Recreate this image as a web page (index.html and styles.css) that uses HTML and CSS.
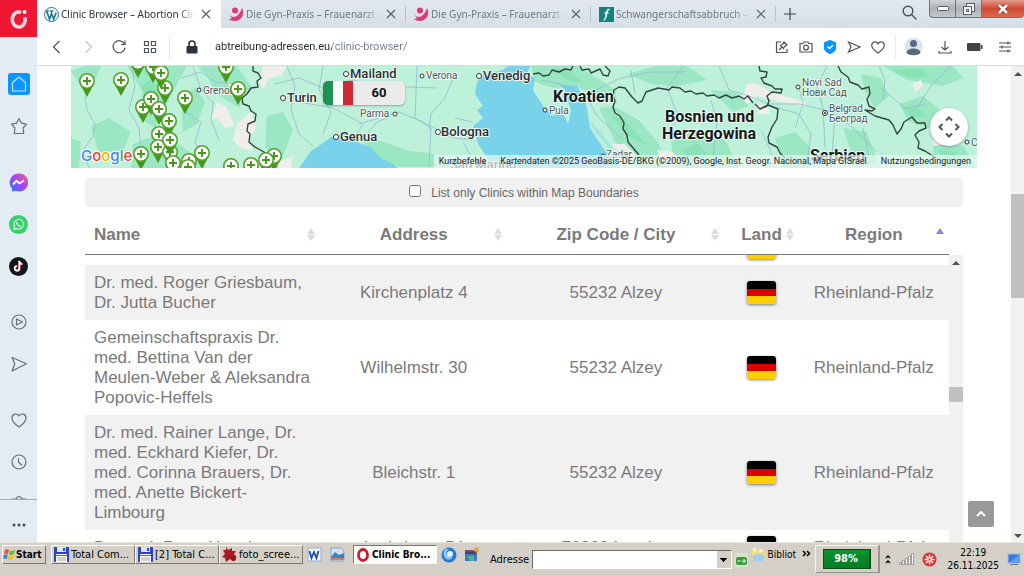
FILE: index.html
```html
<!DOCTYPE html>
<html lang="de">
<head>
    <meta charset="UTF-8">
    <meta name="viewport" content="width=device-width, initial-scale=1.0">
    <title>Clinic Browser – Abortion Clinics</title>
    <link rel="stylesheet" href="styles.css">
</head>
<body>
    <div class="window">
        <!-- left rail -->
        <nav class="rail">
            <button class="rail-logo" aria-label="Menu">
                <svg width="20" height="22" viewBox="0 0 20 22"><path d="M12 4.500A6.500 7.500 0 1 0 16 9.500v2" fill="none" stroke="#fbdadd" stroke-width="3.600"/><circle cx="15.500" cy="4" r="2" fill="#fff"/></svg>
            </button>
            <div class="rail-items">
                <button class="rail-button" aria-label="Home"><svg width="22" height="22" viewBox="0 0 22 22"><rect width="22" height="22" rx="3" fill="#0a95ff"/><path d="M4.500 9.500 11 4l6.500 5.500V18h-13z" fill="none" stroke="#bfe3ff" stroke-width="1.200" stroke-linejoin="round"/></svg></button>
                <button class="rail-button" aria-label="Bookmarks"><svg class="line" width="18" height="18" viewBox="0 0 18 18"><path d="m9 1.500 2.500 4.700 5 .9-3.400 3.900.6 5.500H4.300l.6-5.500L1.500 7.100l5-.9z"/></svg></button>
                <button class="rail-button group" aria-label="Messenger"><svg width="19" height="19" viewBox="0 0 19 19"><defs><linearGradient id="msg" x1="0" y1="1" x2="1" y2="0"><stop offset="0" stop-color="#2a7bff"/><stop offset=".5" stop-color="#a142f5"/><stop offset="1" stop-color="#ff6670"/></linearGradient></defs><path d="M9.500.5a9 9 0 1 1-3 17.200L3 18.500v-3A9 9 0 0 1 9.500.5z" fill="url(#msg)"/><path d="m4 11.500 3.500-3.700 3 2.500L15 7.500" fill="none" stroke="#fff" stroke-width="2"/></svg></button>
                <button class="rail-button" aria-label="WhatsApp"><svg width="19" height="19" viewBox="0 0 19 19"><circle cx="9.500" cy="9.500" r="9.500" fill="#35d06c"/><path d="m4.800 14.300.8-2.800a4.800 4.800 0 1 1 1.900 1.900z" fill="none" stroke="#e8fff0" stroke-width="1.100"/><path d="M7.800 7.300c0 2.200 1.700 3.900 3.900 3.900" fill="none" stroke="#fff" stroke-width="1.500"/></svg></button>
                <button class="rail-button" aria-label="TikTok"><svg width="19" height="19" viewBox="0 0 19 19"><circle cx="9.500" cy="9.500" r="9.500" fill="#14151b"/><path d="M10.700 4v7.500a2.300 2.300 0 1 1-2.300-2.300M10.700 4.300c.2 1.800 1.300 2.800 3 2.900" fill="none" stroke="#f2476a" stroke-width="1.900"/><path d="M10.200 3.800v7.500A2.300 2.300 0 1 1 7.900 9M10.200 4.100c.2 1.800 1.300 2.800 3 2.900" fill="none" stroke="#fff" stroke-width="1.700"/></svg></button>
                <button class="rail-button group" aria-label="Player"><svg class="line" width="18" height="18" viewBox="0 0 18 18"><circle cx="9" cy="9" r="7"/><path d="M6.500 6v6l6-3z"/></svg></button>
                <button class="rail-button" aria-label="Flow"><svg class="line" width="18" height="18" viewBox="0 0 18 18"><path d="m2 2.500 14.500 6.200L2 16l2.800-7.300z"/></svg></button>
                <button class="rail-button group" aria-label="Pinboards"><svg class="line" width="18" height="18" viewBox="0 0 18 18"><path d="M9 16C6 14 2 11 2 7c0-4 5-5.500 7-2 2-3.500 7-2 7 2 0 4-4 7-7 9z"/></svg></button>
                <button class="rail-button" aria-label="History"><svg class="line" width="18" height="18" viewBox="0 0 18 18"><circle cx="9" cy="9" r="7"/><path d="M8.500 5v4l3.500 3.500"/></svg></button>
                <button class="rail-button" aria-label="Settings"><svg class="line" width="18" height="18" viewBox="0 0 18 18"><path d="M2 4h4l1-1c0-2 4-2 4 0l1 1h4v9l-7 3-7-3z"/></svg></button>
            </div>
            <button class="rail-more" aria-label="More"><svg width="14" height="4" viewBox="0 0 14 4" fill="#444b55"><circle cx="2" cy="2" r="1.500"/><circle cx="7" cy="2" r="1.500"/><circle cx="12" cy="2" r="1.500"/></svg></button>
        </nav>

        <div class="browser">
            <!-- tabs -->
            <div class="tabs">
                <div class="tab active">
                    <svg width="15" height="15" viewBox="0 0 15 15"><circle cx="7.500" cy="7.500" r="7" fill="#fff" stroke="#21759b"/><path d="M2.500 4 5.500 12 7.500 6.500 9.700 12l2.500-6.500M1.800 4h3M6 4h3.500" fill="none" stroke="#21759b" stroke-width="1.700"/></svg>
                    <button class="tab-title">Clinic Browser – Abortion Clinics</button>
                    <button class="close" aria-label="Close tab"><svg width="10" height="10" viewBox="0 0 10 10"><path d="m1 1 8 8M9 1 1 9"/></svg></button>
                </div>
                <div class="tab">
                    <svg width="15" height="15" viewBox="0 0 15 15" fill="#dc3a77"><circle cx="6" cy="3.500" r="3"/><path d="M1 8c3 4 9 2 12-7 3 5 0 13-7 13-3 0-5-1-6-2 2 0 3-1 3-1-1-1-2-2-2-3z"/></svg>
                    <button class="tab-title">Die Gyn-Praxis – Frauenarzt Alzey</button>
                    <button class="close" aria-label="Close tab"><svg width="10" height="10" viewBox="0 0 10 10"><path d="m1 1 8 8M9 1 1 9"/></svg></button>
                </div>
                <div class="tab">
                    <svg width="15" height="15" viewBox="0 0 15 15" fill="#dc3a77"><circle cx="6" cy="3.500" r="3"/><path d="M1 8c3 4 9 2 12-7 3 5 0 13-7 13-3 0-5-1-6-2 2 0 3-1 3-1-1-1-2-2-2-3z"/></svg>
                    <button class="tab-title">Die Gyn-Praxis – Frauenarzt Alzey</button>
                    <button class="close" aria-label="Close tab"><svg width="10" height="10" viewBox="0 0 10 10"><path d="m1 1 8 8M9 1 1 9"/></svg></button>
                </div>
                <div class="tab">
                    <svg width="15" height="15" viewBox="0 0 15 15"><rect width="15" height="15" fill="#14837b"/><path d="M10.500 2.500C7.500 2 8 5 7 9c-.5 3-1 4-2.500 4M5.500 6h4" fill="none" stroke="#fff" stroke-width="1.500"/></svg>
                    <button class="tab-title">Schwangerschaftsabbruch – Familienplanung</button>
                    <button class="close" aria-label="Close tab"><svg width="10" height="10" viewBox="0 0 10 10"><path d="m1 1 8 8M9 1 1 9"/></svg></button>
                </div>
                <button class="new-tab" aria-label="New tab"><svg width="12" height="12" viewBox="0 0 12 12"><path d="M6 0v12M0 6h12" stroke="#3d4650" stroke-width="1.200"/></svg></button>
                <div class="window-tools">
                    <button class="tab-search" aria-label="Search tabs"><svg width="15" height="15" viewBox="0 0 15 15" fill="none" stroke="#4b535c" stroke-width="1.400"><circle cx="6" cy="6" r="4.800"/><path d="m9.500 9.500 5 5"/></svg></button>
                    <button class="win-button" aria-label="Minimize"><svg width="12" height="5" viewBox="0 0 12 5"><rect x=".5" y=".5" width="11" height="4" rx="1" fill="#fff" stroke="#5b5f66"/></svg></button>
                    <button class="win-button" aria-label="Restore"><svg width="12" height="12" viewBox="0 0 12 12" fill="#f6f6f6" stroke="#5b5f66"><rect x="3.500" y=".5" width="8" height="8"/><rect x=".5" y="3.500" width="8" height="8"/><rect x="3.500" y="6.500" width="2" height="2"/></svg></button>
                    <button class="win-button win-close" aria-label="Close"><svg width="12" height="10" viewBox="0 0 12 10"><path d="m2 1 8 8M10 1 2 9" stroke="#6b2a22" stroke-width="4"/><path d="m2 1 8 8M10 1 2 9" stroke="#fff" stroke-width="2.600"/></svg></button>
                </div>
            </div>

            <!-- address bar -->
            <div class="toolbar">
                <button class="tool" aria-label="Back"><svg width="16" height="16" viewBox="0 0 16 16"><path d="M10.500 2 4.500 8l6 6"/></svg></button>
                <button class="tool disabled" aria-label="Forward"><svg width="16" height="16" viewBox="0 0 16 16"><path d="m5.500 2 6 6-6 6"/></svg></button>
                <button class="tool" aria-label="Reload"><svg width="16" height="16" viewBox="0 0 16 16"><path d="M13.500 5A6 6 0 1 0 14 9M14 1.500V5.500H10"/></svg></button>
                <button class="tool" aria-label="Speed Dial"><svg width="16" height="16" viewBox="0 0 16 16"><path d="M2.500 2.500h4v4h-4zM9.500 2.500h4v4h-4zM2.500 9.500h4v4h-4zM9.500 9.500h4v4h-4z"/></svg></button>
                <span class="divider"></span>
                <svg class="lock" width="12" height="14" viewBox="0 0 12 14"><rect x=".5" y="6" width="11" height="7.500" rx="1" fill="#2b333d"/><path d="M3 6V4a3 3 0 0 1 6 0v2" fill="none" stroke="#2b333d" stroke-width="1.600"/></svg>
                <input class="url" type="text" aria-label="Address" value="abtreibung-adressen.eu/clinic-browser/">
                <div class="tool-group">
                    <button class="tool" aria-label="Pin"><svg width="14" height="14" viewBox="0 0 14 14"><path d="M6 2H1.500v10.500h10.500V9M4 10l3-3M5.500 5.500l3 3 1-2L12 5 9 2 7.500 4.500z"/></svg></button>
                    <button class="tool" aria-label="Snapshot"><svg width="14" height="14" viewBox="0 0 14 14"><path d="M1 3.500h3l1-1.500h4l1 1.500h3V12H1z"/><circle cx="7" cy="7.500" r="2.400"/></svg></button>
                    <button class="tool" aria-label="Shield"><svg width="14" height="14" viewBox="0 0 14 14"><path d="M7 .5 12.500 3v5c0 3-3 4.500-5.500 5.500C4.500 12.500 1.500 11 1.500 8V3z" fill="#0a95ff" stroke="#0a95ff"/><path d="m4.500 6.500 2 2 3.500-3.500" stroke="#fff" stroke-width="1.500"/></svg></button>
                    <button class="tool" aria-label="Send"><svg width="14" height="14" viewBox="0 0 14 14"><path d="m1.500 2 11.500 5-11.500 5 2.500-5z"/></svg></button>
                    <button class="tool" aria-label="Favourite"><svg width="14" height="14" viewBox="0 0 14 14"><path d="M7 13C4 11 .7 8.500.7 5.300.7 1.500 5.500.8 7 3.800c1.500-3 6.300-2.300 6.300 1.500C13.300 8.500 10 11 7 13z"/></svg></button>
                </div>
                <span class="divider"></span>
                <div class="tool-group wide">
                    <button class="tool" aria-label="Profile"><svg width="19" height="19" viewBox="0 0 19 19"><circle cx="9.500" cy="9.500" r="9" fill="#d8e4ef" stroke="none"/><circle cx="9.500" cy="6.500" r="3.500" fill="#56687d" stroke="none"/><path d="M2.500 16c0-6 14-6 14 0-3 3-11 3-14 0z" fill="#56687d" stroke="none"/></svg></button>
                    <button class="tool" aria-label="Downloads"><svg width="14" height="14" viewBox="0 0 14 14"><path d="M7 1v9M3.500 7 7 10l3.500-3M1 11v2h12v-2"/></svg></button>
                    <button class="tool" aria-label="Battery saver"><svg width="16" height="8" viewBox="0 0 16 8"><rect width="13.500" height="8" rx="1" fill="#444" stroke="none"/><rect x="14" y="2" width="1.500" height="4" fill="#444" stroke="none"/></svg></button>
                    <button class="tool" aria-label="Easy setup"><svg width="14" height="12" viewBox="0 0 14 12"><path d="M1 2h12M1 6h12M1 10h12M10 .5v3M4 4.500v3M10 8.500v3"/></svg></button>
                </div>
            </div>

            <div class="viewport">
                <main class="page">
                    <div class="map">
                        <svg class="map-canvas" viewBox="0 0 906 102" preserveAspectRatio="xMidYMid slice">
                            <defs>
                                <g id="pin">
                                    <path d="M-7.500 2 0 16 7.500 2z" fill="#46971b"/>
                                    <circle r="7.200" fill="#fff" stroke="#55a228" stroke-width="1.600"/>
                                    <path d="M-4 0h8M0-4v8" stroke="#46971b" stroke-width="1.900"/>
                                </g>
                            </defs>
                            <rect width="906" height="102" fill="#bdf1da"/>
                            <!-- forests -->
                            <g fill="#9be7c3">
                                <path d="M0 5l14-5h16l-5 12-15 8zM56 0h60l-10 18-12 24-10 20-18-12 6-24zM110 30l14-8 10 14-8 22-14 8zM20 60l18-8 22 14-8 18-24 4zM126 0h40l14 20-12 22-22-14-10-18zM196 50l16-4 10 18-10 26-18-8zM62 78l30-12 24 18 20 18H60zM0 72l10 4-2 26H0z"/>
                                <path d="M316 101l-10-14-18-14 22 2 28 10 22 2 18 8 4 6zM460 0h46l20 12 18 12 2 14-20-6-20-12-24 2-18-6zM528 42l14-2 26 14 20 24 10 24h-30l-24-26zM556 8l30-8h30l20 14-30 6-26-2zM600 76l24-12 30 10 14 28h-64zM640 24l24 2 14 14-16 6zM704 72l20-6 20 20-6 16h-26zM790 8l20 4 8 18-14 12-10-16zM812 0h70l10 12-20 8-36-6zM828 38l24-8 22 18-8 16-28-8zM862 76l30 4 14 22h-44zM772 62l24 4 10 30-20 6z"/>
                            </g>
                            <g fill="#83dfb2" opacity=".7"><path d="M480 2l18 4 14 10-16-2zM540 50l12 2 22 26-14-6zM820 4l30-2 8 8-20 2zM70 20l12-8 6 16-12 10zM610 84l16-6 16 14-20 4zM866 84l20 2-6 10zM832 42l14-2 10 10-14 2z"/></g>
                            <!-- mountains -->
                            <g fill="#f0eeea">
                                <path d="M192 0h24l-6 10-12 2-6 12-4-10zM146 36l10 6 8 18-10 2-8-10-6 2zM180 46l6 14-8 14 4 12-12-4-8-8 4-16zM206 96l16-6-2 12h-12zM156 16l12 4 6 10-10 2z"/>
                                <path d="M676 18l10 0 14 8 34 10v4l-24-4-24-6-10 8-4-8zM684 38l12 2 4 8-12 0zM842 18l8-4 2 6-8 6zM586 84l16 2 8 12-18 2zM862 74l8-4 6 8-14 2zM540 78l14 0 12 12-6 6z"/>
                            </g>
                            <!-- sea -->
                            <g fill="#78d3ea">
                                <path d="M228 102l12-17 12-8 8-6 14-4 14 10 12 4 10 11 12 6 4 4z"/>
                                <path d="M404 28l2-12 8-8 18-4 6-5h22l-4 8 8 5-2 12 12 19 8 7 8-8 7 16 3-14-7-21-5-4 18 1 6 10 4 12 3 20 13 20 17 21H421l-5-12-9-13-5-18 10-8-6-8 6-4z"/>
                                <path d="M516 52l12 12 14 18-3 1-14-16z" fill="#a4e5df"/>
                            </g>
                            <!-- rivers and roads -->
                            <g class="roads">
                                <path d="M14 30l2 14 8 14-2 12-10 14 6 18M60 0l4 20-6 24 10 18 2 20M110 12l20-6 14 10 20 2M114 46l16 10-6 20 6 14M122 0l8 24 12 12-2 18 8 20M204 18l24-6 24 10 30-8 24 6 60 2M216 0l8 20-4 24 8 24 14 12M228 36l34 6 30 16-10 16M252 0l-4 24 12 22-8 22M288 58l40-12 24 10 30 16 20 2M346 0l-2 52 16 10-2 38M382 12l-8 20-14 16-2 16M296 68l10-12 14-6M392 76l8 14-10 12M384 52l18 4"/>
                                <path d="M470 14l20 4 26 14 10 18 26 24M520 26l30-14 30-6 34 0M612 0l-16 22 12 30-16 20M560 4l4 24M648 0l10 24 20 6 20 8 30 0 34 8 20 16 24 24M700 40l28 8 12 20-4 26M728 22l4 16-8 24M756 0l-10 20 6 22 2 40M764 50l-4 52M792 62l8 40M810 22l24 20 20-4M808 0l6 14-2 20M880 0l-20 20-14 22M640 34l6 22-4 36M690 64l12 26 30 4"/>
                            </g>
                            <!-- borders -->
                            <g class="borders">
                                <path d="M182 0v5l5 2 3 5-4 3 1 6-7 1-4 6-5 4 1 6 6 2 2 5 5 3-1 7-7 3-1 7 3 3-1 8 6 5 9 5 8 9"/>
                                <path d="M462 8l6-1 4 3 6-1 3-5 7 2 6-3 6 1 2-4M509 0l2 4 7-1 2 4 9-4 3 6 5 1 2-5-5-5"/>
                                <path d="M682 37l-5-7-4 3-5-3-7 2-6-3-7 3-5-3-7 1-4-3-7 1-5-3-6 1-5-4-8-1-3 3-5-1-6-1-12 4-4 9-4 2-6-6-7-9-6-1-5 3-1 6 2 5-2 6 2 6 5 3 4 7-1 6 4 6 1 7 6 7 5 6"/>
                                <path d="M684 38l5 5 8-4 10 4-1 10-5 8-4 10 1 6 8 4 3 6 5 5M688 0l1 5 7 1-1 5-5 1 3 5 8 3 3 3 7 0-1 4-9-1-5 4 2 5-2 5-7 3"/>
                                <path d="M767 0l3 6 7 5 2 5 8 3 4 4 7-2 1 7-3 5 2 7 6 3-3 2-7-1 10 6 14 4 4 5 4 9 4-5 3-7 8-5 5 6 8 0 1 5-7 3-4 4 4 7-1 6 7 3 11 7"/>
                            </g>
                            <!-- city names -->
                            <g class="dots">
                                <circle cx="275" cy="8" r="2.500"/><circle cx="408" cy="10" r="2.500"/><circle cx="212" cy="32" r="2.500"/><circle cx="265" cy="71" r="2.500"/><circle cx="367" cy="66" r="2.500"/>
                                <circle cx="351" cy="10" r="2"/><circle cx="474" cy="44" r="2"/><circle cx="324" cy="48" r="2"/><circle cx="128" cy="24" r="2"/><circle cx="727" cy="21" r="2"/><circle cx="532" cy="90" r="2"/><circle cx="896" cy="76" r="2"/><circle cx="754" cy="47" r="2.500"/><circle cx="754" cy="47" r=".8"/>
                            </g>
                            <g class="city">
                                <text x="279" y="12">Mailand</text>
                                <text x="412" y="14">Venedig</text>
                                <text x="216" y="36">Turin</text>
                                <text x="269" y="75">Genua</text>
                                <text x="370" y="70">Bologna</text>
                            </g>
                            <g class="town">
                                <text x="355" y="13">Verona</text>
                                <text x="478" y="48">Pula</text>
                                <text x="289" y="51">Parma</text>
                                <text x="132" y="28">Grenoble</text>
                                <text x="731" y="20">Novi Sad</text>
                                <text x="731" y="30">Нови Сад</text>
                                <text x="758" y="46">Belgrad</text>
                                <text x="758" y="56">Београд</text>
                                <text x="535" y="92">Zadar</text>
                                <text x="900" y="80">Craiova</text>
                            </g>
                            <text class="city" x="379" y="103">San Marino</text>
                            <g class="country">
                                <text x="482" y="36">Kroatien</text>
                                <text x="594" y="56">Bosnien und</text>
                                <text x="591" y="73">Herzegowina</text>
                                <text x="739" y="95">Serbien</text>
                            </g>
                            <use href="#pin" x="67" y="-4"/><use href="#pin" x="82" y="1"/><use href="#pin" x="155" y="1"/><use href="#pin" x="94" y="22"/><use href="#pin" x="90" y="7"/>
                            <use href="#pin" x="50" y="14"/><use href="#pin" x="16" y="15"/><use href="#pin" x="167" y="23"/><use href="#pin" x="114" y="32"/>
                            <use href="#pin" x="72" y="41"/><use href="#pin" x="80" y="33"/><use href="#pin" x="98" y="55"/><use href="#pin" x="88" y="43"/><use href="#pin" x="88" y="68"/>
                            <use href="#pin" x="87" y="81"/><use href="#pin" x="99" y="86"/><use href="#pin" x="99" y="74"/><use href="#pin" x="70" y="88"/>
                            <use href="#pin" x="118" y="95"/><use href="#pin" x="131" y="87"/><use href="#pin" x="102" y="97"/><use href="#pin" x="117" y="101"/>
                            <use href="#pin" x="203" y="90"/><use href="#pin" x="195" y="94"/><use href="#pin" x="180" y="99"/><use href="#pin" x="160" y="100"/>
                        </svg>
                        <div class="cluster"><span class="flag-it"></span><span class="cluster-count">60</span></div>
                        <div class="google"><span class="g-blue">G</span><span class="g-red">o</span><span class="g-yellow">o</span><span class="g-blue">g</span><span class="g-green">l</span><span class="g-red">e</span></div>
                        <button class="pan" aria-label="Map camera controls"><svg width="22" height="22" viewBox="0 0 22 22"><path d="m8 4.500 3-3 3 3M8 17.500l3 3 3-3M4.500 8l-3 3 3 3M17.500 8l3 3-3 3" fill="none" stroke="#555" stroke-width="2"/></svg></button>
                        <div class="attribution">
                            <button class="shortcuts">Kurzbefehle</button>
                            <span>Kartendaten ©2025 GeoBasis-DE/BKG (©2009), Google, Inst. Geogr. Nacional, Mapa GISrael</span>
                            <a href="#">Nutzungsbedingungen</a>
                        </div>
                    </div>

                    <div class="list">
                        <label class="filter" for="in-bounds">
                            <input type="checkbox" id="in-bounds">
                            List only Clinics within Map Boundaries
                        </label>

                        <div class="table-head">
                            <table>
                                <colgroup><col class="c-name"><col class="c-address"><col class="c-city"><col class="c-land"><col class="c-region"></colgroup>
                                <thead>
                                    <tr>
                                        <th class="sort">Name</th>
                                        <th class="sort">Address</th>
                                        <th class="sort">Zip Code / City</th>
                                        <th class="sort">Land</th>
                                        <th class="sort asc">Region</th>
                                    </tr>
                                </thead>
                            </table>
                        </div>
                        <div class="table-body">
                            <div class="table-scroll">
                                <table>
                                    <colgroup><col class="c-name"><col class="c-address"><col class="c-city"><col class="c-land"><col class="c-region"></colgroup>
                                    <tbody>
                                        <tr><td></td><td></td><td></td><td><span class="flag-de"></span></td><td></td></tr>
                                        <tr><td>Dr. med. Roger Griesbaum, Dr. Jutta Bucher</td><td>Kirchenplatz 4</td><td>55232 Alzey</td><td><span class="flag-de"></span></td><td>Rheinland-Pfalz</td></tr>
                                        <tr><td>Gemeinschaftspraxis Dr. med. Bettina Van der Meulen-Weber &amp; Aleksandra Popovic-Heffels</td><td>Wilhelmstr. 30</td><td>55232 Alzey</td><td><span class="flag-de"></span></td><td>Rheinland-Pfalz</td></tr>
                                        <tr><td>Dr. med. Rainer Lange, Dr. med. Eckhard Kiefer, Dr. med. Corinna Brauers, Dr. med. Anette Bickert-Limbourg</td><td>Bleichstr. 1</td><td>55232 Alzey</td><td><span class="flag-de"></span></td><td>Rheinland-Pfalz</td></tr>
                                        <tr><td>Dr. med. Peter Hauck</td><td>Ludwigstr. 54</td><td>76829 Landau</td><td><span class="flag-de"></span></td><td>Rheinland-Pfalz</td></tr>
                                    </tbody>
                                </table>
                            </div>
                            <div class="scrollbar inner">
                                <span class="arrow up"></span>
                                <span class="thumb"></span>
                            </div>
                        </div>
                    </div>
                    <button class="to-top" aria-label="Back to top"><svg width="10" height="6" viewBox="0 0 10 6"><path d="m1 5 4-4 4 4" fill="none" stroke="#fff" stroke-width="2"/></svg></button>
                </main>
                <div class="scrollbar outer">
                    <span class="arrow up"></span>
                    <span class="thumb"></span>
                    <span class="arrow down"></span>
                </div>
            </div>
        </div>
    </div>

    <!-- desktop taskbar -->
    <footer class="taskbar">
        <button class="task start"><svg width="13" height="13" viewBox="0 0 13 13"><path d="M2 2q2-1.500 4 0L5 6Q3 5 1 6z" fill="#e8552a"/><path d="M7 2.500q2 1 5-.5l-1 4q-3 1.500-5 .5z" fill="#6cb52d"/><path d="M.8 7q2-1.500 4 0l-1 4Q2 10 0 11z" fill="#3a86d8"/><path d="M5.700 7.500q2 1 5-.5l-1 4q-3 1.500-5 .5z" fill="#f5bf24"/></svg>Start</button>
        <div class="tasks">
            <button class="task"><svg width="15" height="15" viewBox="0 0 15 15"><rect width="15" height="15" rx="1" fill="#2a44c8"/><rect x="3" width="9" height="5" fill="#dfe4f7"/><rect x="9" y="1" width="2" height="3" fill="#2a44c8"/><rect x="2" y="7" width="11" height="8" fill="#fff"/><path d="M2 8.500h11" stroke="#d34" /><path d="M3 11h9M3 13h9" stroke="#9aa"/></svg>Total Com...</button>
            <button class="task"><svg width="15" height="15" viewBox="0 0 15 15"><rect width="15" height="15" rx="1" fill="#2a44c8"/><rect x="3" width="9" height="5" fill="#dfe4f7"/><rect x="9" y="1" width="2" height="3" fill="#2a44c8"/><rect x="2" y="7" width="11" height="8" fill="#fff"/><path d="M2 8.500h11" stroke="#d34" /><path d="M3 11h9M3 13h9" stroke="#9aa"/></svg>[2] Total C...</button>
            <button class="task"><svg width="15" height="15" viewBox="0 0 15 15"><path d="m4 0 2 3 4-2 0 3 4 0-2 3 3 3-4 0 0 4-3-2-4 3-1-4-3-1 3-3-2-4 3 0z" fill="#a81d1d"/><circle cx="11.500" cy="11.500" r="2.500" fill="#8c1515"/></svg>foto_scree...</button>
        </div>
        <button class="quick" aria-label="Word"><svg width="15" height="15" viewBox="0 0 15 15"><rect x="1" y="1" width="13" height="13" fill="#f3f7fd" stroke="#8fb0dc"/><path d="m2.500 4 2 7L7 5l2.500 6 2-7" fill="none" stroke="#1c4fa5" stroke-width="1.800"/></svg></button>
        <button class="quick" aria-label="Pictures"><svg width="15" height="15" viewBox="0 0 15 15"><path d="M1 1h10l3 3v10H1z" fill="#cfe3f5" stroke="#8aa3c0"/><path d="M1 10 5 5l4 3 5-2v5H1z" fill="#3b82c4"/><path d="M1 11h13v2H1z" fill="#e07856"/></svg></button>
        <button class="task current"><svg width="14" height="14" viewBox="0 0 14 14"><ellipse cx="7" cy="7" rx="4.500" ry="5.500" fill="#fff" stroke="#d8172d" stroke-width="2.800"/></svg>Clinic Bro...</button>
        <button class="quick" aria-label="Thunderbird"><svg width="16" height="16" viewBox="0 0 16 16"><circle cx="8" cy="8" r="7.500" fill="#2478d6"/><path d="M4 2Q1 7 4 11q4 4 8-1-4 1-6-2Q4 5 8 2z" fill="#8ec7f7"/><circle cx="9" cy="7" r="3" fill="#e8f3ff"/></svg></button>
        <button class="quick" aria-label="Image viewer"><svg width="15" height="15" viewBox="0 0 15 15"><rect x="1" y="4" width="12" height="10" fill="#4b76b8"/><path d="M1 4h12v3H1z" fill="#4c3d78"/><path d="M3 9h7v5H6z" fill="#43b59c"/><path d="m10 1 4-1 1 5-3 1z" fill="#e7a43c"/><path d="M1 3h9v2H1z" fill="#7a4a6c"/></svg></button>
        <label class="address-label" for="address">Adresse</label>
        <select class="address" id="address"><option></option></select>
        <button class="go" aria-label="Go"><svg width="14" height="14" viewBox="0 0 14 14"><rect width="14" height="14" fill="#d5e6cf"/><rect x="2" y="4" width="11" height="8" rx="2" fill="#3d9b3a"/><path d="M3.500 8h3M8 8h3M9.500 6l2 2-2 2" fill="none" stroke="#fff"/></svg></button>
        <button class="library"><svg width="15" height="15" viewBox="0 0 15 15"><path d="M1 2h5l1 2h7v9H1z" fill="#f4dc7c"/><path d="M2 1h3v4H2zM8 2h4v3H8z" fill="#f9edb8"/><path d="M1 9q6-4 13 0l-2 5H3z" fill="#9fcdea"/></svg>Bibliot</button>
        <button class="chevrons" aria-label="More toolbars"><svg width="9" height="7" viewBox="0 0 9 7"><path d="m1 1 2.500 2.500L1 6M5 1l2.500 2.500L5 6" fill="none" stroke="#000" stroke-width="1.500"/></svg></button>
        <div class="battery"><span class="battery-level">98%</span></div>
        <div class="tray">
            <svg width="6" height="10" viewBox="0 0 6 10" fill="none" stroke="#000" stroke-width="1.400"><path d="m1 4 2-2 2 2M1 9l2-2 2 2"/></svg>
            <svg width="15" height="12" viewBox="0 0 15 12" fill="#fff" stroke="#8b8b86" stroke-width=".8"><path d="M.5 9.500h2v2h-2zM3.500 7.500h2v4h-2zM6.500 5.500h2v6h-2zM9.500 3h2v8.500h-2zM12.500.5h2v11h-2z"/></svg>
            <svg width="15" height="15" viewBox="0 0 15 15"><circle cx="7.500" cy="7.500" r="7" fill="#e0302f"/><path d="M7.500 2.500v4M7.500 8.500v4M2.500 7.500h4M8.500 7.500h4M4 4l2.500 2.500M11 4 8.500 6.500M4 11l2.500-2.500M11 11 8.500 8.500" stroke="#fff" stroke-width="1.400"/></svg>
            <div class="clock"><span>22:19</span><span>26.11.2025</span></div>
            <svg class="desktop" width="14" height="12" viewBox="0 0 14 12"><rect x="1" y="1" width="12" height="9" fill="#3a78e0" stroke="#9db9e6"/><path d="M3 11.500h8" stroke="#777"/><path d="M1.500 9.500 12 2v7.500z" fill="#5f9bf0"/></svg>
        </div>
    </footer>
</body>
</html>
```
FILE: styles.css
```css
* {
    box-sizing: border-box;
}

body {
    margin: 0;
    height: 100vh;
    display: flex;
    flex-direction: column;
    overflow: hidden;
    background: #fff;
    font-family: "Liberation Sans", Arial, sans-serif;
}

button {
    margin: 0;
    padding: 0;
    border: none;
    background: none;
    font: inherit;
    color: inherit;
    cursor: pointer;
}

svg {
    display: block;
    flex: none;
}

.window {
    flex: 1;
    min-height: 0;
    display: flex;
}

/* rail */
.rail {
    width: 37px;
    flex: none;
    display: flex;
    flex-direction: column;
    background: #e3ebf3;
}

.rail-logo {
    height: 37px;
    flex: none;
    display: flex;
    align-items: center;
    justify-content: center;
    background: #ee1630;
}

.rail-items {
    flex: 1;
    min-height: 0;
    overflow: hidden;
    padding-top: 26px;
    display: flex;
    flex-direction: column;
    border-bottom: 1px solid #a4aebb;
}

.rail-button {
    height: 42px;
    flex: none;
    display: flex;
    align-items: center;
    justify-content: center;
}

.rail-button.group {
    margin-top: 14px;
}

.line {
    fill: none;
    stroke: #66707c;
    stroke-width: 1.2;
    stroke-linejoin: round;
}

.rail-more {
    height: 42px;
    padding-top: 8px;
    display: flex;
    align-items: center;
    justify-content: center;
}

/* tabs */
.browser {
    flex: 1;
    min-width: 0;
    display: flex;
    flex-direction: column;
}

.tabs {
    height: 28px;
    flex: none;
    display: flex;
    background: linear-gradient(#e2e9f0, #d5dee7);
    font: 10px "Noto Sans", sans-serif;
    color: #6e7984;
}

.tab {
    flex: 0 1 185px;
    min-width: 0;
    display: flex;
    align-items: center;
    padding: 0 10px 0 8px;
    position: relative;
}

.tab + .tab::after {
    content: "";
    height: 16px;
    border-right: 1px solid #b9c3cd;
    position: absolute;
    right: 0;
    top: 6px;
}

.tab.active {
    flex-basis: 184px;
    background: #fff;
    color: #2b333d;
    padding-left: 7px;
}

.tab-title {
    flex: 1;
    min-width: 0;
    margin: 0 6px 0 2px;
    text-align: left;
    white-space: nowrap;
    overflow: hidden;
    -webkit-mask-image: linear-gradient(to right, #000 88%, transparent);
    mask-image: linear-gradient(to right, #000 88%, transparent);
}

.close svg {
    fill: none;
    stroke: #57616c;
    stroke-width: 1.2;
}

.new-tab {
    padding: 0 8px;
}

.window-tools {
    margin-left: auto;
    display: flex;
    align-items: flex-start;
}

.tab-search {
    padding: 5px 12px 0 0;
}

.win-button {
    width: 26px;
    height: 18px;
    display: flex;
    align-items: center;
    justify-content: center;
    border: 1px solid #70757c;
    border-width: 0 0 1px 1px;
    background: linear-gradient(#d2d5d8, #aeb2b7 50%, #c4c8cc);
}

.win-button:nth-child(2) {
    border-bottom-left-radius: 4px;
}

.win-close {
    width: 43px;
    background: linear-gradient(#e39a8c, #cf4a34 50%, #d9694f);
    border-bottom-right-radius: 4px;
}

/* address bar */
.toolbar {
    height: 38px;
    flex: none;
    display: flex;
    align-items: center;
    padding: 0 12px;
    background: #fff;
    border-bottom: 1px solid #d9dcdf;
}

.toolbar > .tool {
    margin-right: 15px;
}

.toolbar > .tool:nth-child(4) {
    margin-right: 11px;
}

.tool svg {
    fill: none;
    stroke: #4b535c;
    stroke-width: 1.2;
}

.tool.disabled svg {
    stroke: #c3c8cd;
}

.divider {
    height: 24px;
    border-left: 1px solid #e6e9ec;
}

.lock {
    margin: 0 17px 0 16px;
}

.url {
    flex: 1;
    min-width: 0;
    padding: 0;
    border: none;
    outline: none;
    font: 11px Roboto, sans-serif;
    color: transparent;
    background: linear-gradient(to right, #20262d 117px, #737e89 117px);
    -webkit-background-clip: text;
    background-clip: text;
}

.tool-group {
    display: flex;
    align-items: center;
    gap: 10px;
    padding-right: 10px;
}

.tool-group.wide {
    gap: 15px;
    padding: 0 0 0 8px;
}

/* page */
.viewport {
    flex: 1;
    min-height: 0;
    display: flex;
}

.page {
    flex: 1;
    min-width: 0;
    position: relative;
    display: flex;
    flex-direction: column;
    padding: 0 34px;
    color: #7a7a7a;
}

.map {
    height: 102px;
    flex: none;
    position: relative;
    overflow: hidden;
    font-family: Roboto, sans-serif;
}

.map-canvas {
    width: 100%;
    height: 100%;
}

.roads {
    fill: none;
    stroke: #93b9cf;
    stroke-width: 1;
    opacity: 0.8;
    stroke-linejoin: round;
}

.borders {
    fill: none;
    stroke: #33443f;
    stroke-width: 1.4;
    stroke-linejoin: round;
}

.dots {
    fill: #fff;
    stroke: #333;
    stroke-width: 1;
}

.city,
.town,
.country {
    fill: #2c2f33;
    stroke: #eafaf3;
    stroke-width: 2;
    stroke-linejoin: round;
    paint-order: stroke;
}

.city {
    font-size: 13px;
    font-weight: 500;
}

.town {
    font-size: 10px;
    fill: #4f565c;
}

.country {
    font-size: 16px;
    font-weight: 700;
    fill: #15181a;
}

.cluster {
    position: absolute;
    left: 252px;
    top: 15px;
    width: 82px;
    height: 24px;
    display: flex;
    border-radius: 5px;
    overflow: hidden;
    background: #ebebeb;
    box-shadow: 0 1px 2px rgba(0, 0, 0, 0.3);
}

.flag-it {
    width: 30px;
    background: linear-gradient(to right, #1f9150 33%, #fff 33%, #fff 66%, #cf2b37 66%);
}

.cluster-count {
    flex: 1;
    text-align: center;
    font-size: 13px;
    font-weight: 700;
    line-height: 24px;
    color: #111;
}

.google {
    position: absolute;
    left: 10px;
    bottom: 2px;
    font: 500 15px/20px Inter, sans-serif;
    -webkit-text-stroke: 2px #fff;
    paint-order: stroke;
}

.g-blue {
    color: #4285f4;
}

.g-red {
    color: #ea4335;
}

.g-yellow {
    color: #f5b400;
}

.g-green {
    color: #34a853;
}

.pan {
    position: absolute;
    right: 9px;
    top: 42px;
    width: 38px;
    height: 38px;
    display: flex;
    align-items: center;
    justify-content: center;
    border-radius: 50%;
    background: #fff;
    box-shadow: 0 1px 3px rgba(0, 0, 0, 0.3);
}

.attribution {
    position: absolute;
    right: 0;
    bottom: 0;
    height: 13px;
    padding: 0 6px 0 5px;
    display: flex;
    gap: 14px;
    background: rgba(235, 247, 242, 0.7);
    font-size: 9px;
    line-height: 13px;
    white-space: nowrap;
    color: #222;
}

.attribution a {
    color: inherit;
    text-decoration: none;
}

.list {
    flex: 1;
    min-height: 0;
    display: flex;
    flex-direction: column;
    padding: 10px 14px 0;
}

.filter {
    height: 29px;
    flex: none;
    display: flex;
    align-items: center;
    justify-content: center;
    border-radius: 4px;
    background: #f1f1f1;
    font-size: 12px;
    color: #666;
}

.filter input {
    width: 12px;
    height: 12px;
    margin: 0 10px 4px 0;
}

table {
    width: 100%;
    table-layout: fixed;
    border-collapse: collapse;
    font-size: 17px;
    line-height: 20px;
}

.c-name {
    width: 27.2%;
}

.c-address {
    width: 21.7%;
}

.c-city {
    width: 25.1%;
}

.c-land {
    width: 8.6%;
}

.table-head {
    flex: none;
    padding-right: 14px;
}

.table-head table {
    border-bottom: 1px solid #777;
}

th {
    height: 47px;
    padding: 10px 0 0;
    position: relative;
    vertical-align: middle;
}

th:first-child {
    padding-left: 9px;
    text-align: left;
}

.sort::before,
.sort::after {
    content: "";
    position: absolute;
    right: 5px;
    border: 4px solid transparent;
}

.sort::before {
    top: 21px;
    border-bottom: 6px solid #dcdcdc;
    border-top: 0;
}

.sort::after {
    top: 28px;
    border-top: 6px solid #dcdcdc;
    border-bottom: 0;
}

.sort.asc::before {
    border-bottom-color: #8289d6;
}

.sort.asc::after {
    display: none;
}

.table-body {
    flex: 1;
    min-height: 0;
    display: flex;
}

.table-scroll {
    flex: 1;
    overflow: hidden;
}

/* list is scrolled between two rows */
.table-scroll table {
    margin-top: -25px;
}

tbody tr {
    height: 35px;
}

tbody tr:nth-child(even) {
    background: #f1f1f1;
}

td {
    padding: 8px 0 7px;
    text-align: center;
    vertical-align: middle;
}

td:first-child {
    padding-left: 9px;
    padding-right: 5px;
    text-align: left;
}

td:nth-child(4) {
    padding: 0;
}

.flag-de {
    display: block;
    width: 29px;
    height: 23px;
    margin: 0 auto;
    border-radius: 3px;
    background: linear-gradient(#000 33%, #dd0000 33%, #dd0000 66%, #ffce00 66%);
    box-shadow: 0 1px 3px rgba(0, 0, 0, 0.5);
}

.scrollbar {
    flex: none;
    display: flex;
    flex-direction: column;
    align-items: center;
    background: #f1f1f1;
}

.scrollbar .thumb {
    width: 100%;
    background: #c1c1c1;
}

.inner {
    width: 14px;
    padding-top: 6px;
}

.inner .thumb {
    height: 15px;
    margin-top: 122px;
}

.outer {
    width: 13px;
    padding: 6px 0 4px;
}

.outer .thumb {
    height: 104px;
    margin-top: 118px;
}

.arrow {
    border: 4px solid transparent;
}

.arrow.up {
    border-bottom-color: #505050;
    border-top: 0;
}

.arrow.down {
    border-top-color: #505050;
    border-bottom: 0;
    margin-top: auto;
}

.to-top {
    position: absolute;
    right: 17px;
    bottom: 15px;
    width: 26px;
    height: 26px;
    display: flex;
    align-items: center;
    justify-content: center;
    border-radius: 2px;
    background: #999;
}

/* taskbar */
.taskbar {
    height: 34px;
    flex: none;
    display: flex;
    align-items: flex-start;
    padding: 2px 3px 0 2px;
    background: #d4d0c8;
    border-top: 1px solid #e9e6e0;
    font-family: "DejaVu Sans Condensed", "DejaVu Sans", sans-serif;
    font-size: 11px;
    color: #000;
}

.task {
    width: 84px;
    height: 19px;
    flex: none;
    display: flex;
    align-items: center;
    gap: 2px;
    padding: 0 2px;
    border: 1px solid;
    border-color: #fff #7c7870 #7c7870 #fff;
    white-space: nowrap;
    overflow: hidden;
}

.start {
    width: 44px;
    padding: 0;
    gap: 0;
    font-weight: 700;
    font-size: 10px;
}

.tasks {
    display: flex;
    margin: 0 4px 0 5px;
}

.quick {
    width: 23px;
    height: 19px;
    display: flex;
    align-items: center;
    flex: none;
}

.current {
    border-color: #7c7870 #fff #fff #7c7870;
    background: #fdfdfc;
    font-weight: 700;
    font-size: 10px;
    margin-right: 4px;
}

.address-label {
    margin: 8px 3px 0 3px;
}

.address {
    flex: 1;
    min-width: 0;
    height: 19px;
    margin-top: 5px;
    border: 1px solid;
    border-color: #6f6b64 #fff #fff #6f6b64;
    border-radius: 0;
    appearance: none;
    background:
        linear-gradient(#000, #000) right 4px top 7px / 7px 1px no-repeat,
        linear-gradient(#000, #000) right 5px top 8px / 5px 1px no-repeat,
        linear-gradient(#000, #000) right 6px top 9px / 3px 1px no-repeat,
        linear-gradient(#000, #000) right 7px top 10px / 1px 1px no-repeat,
        linear-gradient(#d4d0c8, #d4d0c8) right / 14px 100% no-repeat,
        #fff;
}

.go {
    margin: 8px 3px 0 2px;
}

.library {
    display: flex;
    align-items: center;
    gap: 2px;
    width: 46px;
    height: 19px;
    overflow: hidden;
    font-size: 10px;
}

.chevrons {
    margin: 5px 4px 0 5px;
}

.battery {
    width: 64px;
    height: 28px;
    display: flex;
    align-items: center;
    justify-content: center;
    border: 1px solid;
    border-color: #f5f3ee #98948c #98948c #f5f3ee;
}

.battery-level {
    width: 48px;
    height: 20px;
    border: 1px solid #0b4d16;
    border-right-width: 2px;
    background: linear-gradient(#0c9430, #067a22);
    color: #fff;
    font-size: 11px;
    font-weight: 700;
    line-height: 18px;
    text-align: center;
}

.tray {
    display: flex;
    align-items: center;
    height: 28px;
    padding-left: 5px;
    gap: 8px;
    border-left: 1px solid #98948c;
}

.clock {
    display: flex;
    flex-direction: column;
    align-items: center;
    margin-left: 3px;
    font-size: 10px;
    line-height: 13px;
}
```
